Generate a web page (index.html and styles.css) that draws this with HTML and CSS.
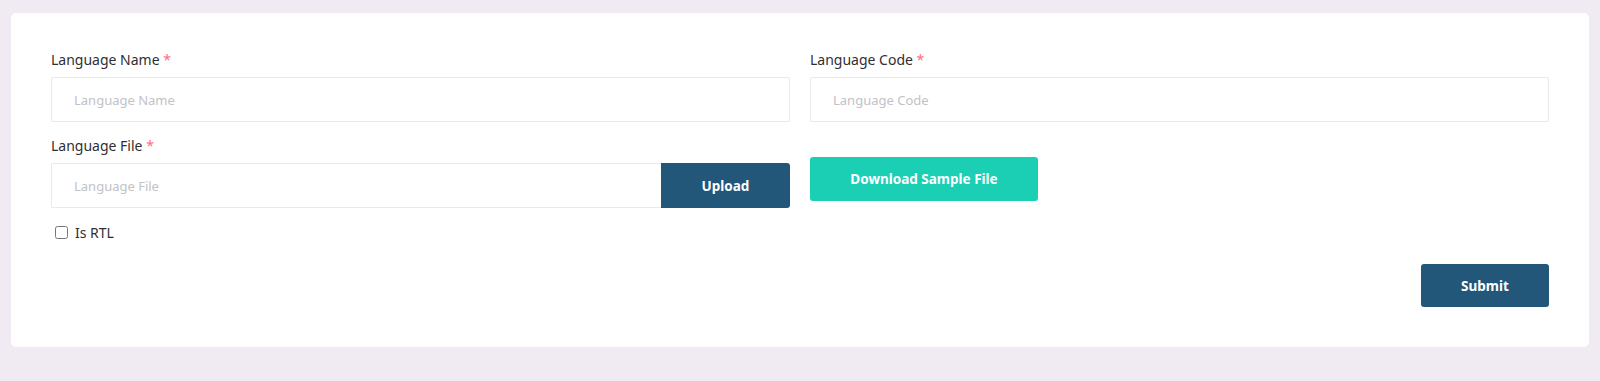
FILE: index.html
```html
<!DOCTYPE html>
<html lang="en">
<head>
    <meta charset="UTF-8">
    <meta name="viewport" content="width=device-width, initial-scale=1.0">
    <title>Add Language</title>
    <link rel="stylesheet" href="styles.css">
</head>
<body>

    <div class="card">
        <form class="language-form" onsubmit="return false;">
            <div class="form-grid">
                <!-- Row 1 -->
                <div class="form-group">
                    <label class="form-label" for="lang-name">Language Name <span class="required">*</span></label>
                    <input type="text" class="form-input" id="lang-name" placeholder="Language Name">
                </div>
                <div class="form-group">
                    <label class="form-label" for="lang-code">Language Code <span class="required">*</span></label>
                    <input type="text" class="form-input" id="lang-code" placeholder="Language Code">
                </div>

                <!-- Row 2 -->
                <div class="form-group">
                    <label class="form-label" for="lang-file">Language File <span class="required">*</span></label>
                    <div class="input-group">
                        <input type="text" class="form-input" id="lang-file" placeholder="Language File" readonly>
                        <button type="button" class="btn btn-primary btn-upload">Upload</button>
                    </div>
                    <label class="check">
                        <input type="checkbox" class="check-box">
                        <span>Is RTL</span>
                    </label>
                </div>
                <div class="form-group sample-group">
                    <button type="button" class="btn btn-accent btn-sample">Download Sample File</button>
                </div>
            </div>

            <div class="form-actions">
                <button type="submit" class="btn btn-primary btn-submit">Submit</button>
            </div>
        </form>
    </div>

</body>
</html>
```

FILE: styles.css
```css
:root {
    --page-bg: #f0ebf3;
    --card-bg: #ffffff;
    --text-color: #2f2f33;
    --placeholder: #c2c2c6;
    --border: #e9e9ec;
    --required: #ff6b81;
    --primary: #22577a;
    --accent: #1bcfb4;
}

* { box-sizing: border-box; margin: 0; padding: 0; }

body {
    padding: 13px 11px;
    font-family: 'Noto Sans', 'Open Sans', sans-serif;
    background: var(--page-bg);
    color: var(--text-color);
}

/* White panel holding the form */
.card {
    background: var(--card-bg);
    border-radius: 5px;
    padding: 37px 40px 40px;
}

.form-grid {
    display: grid;
    grid-template-columns: 1fr 1fr;
    column-gap: 20px;
    row-gap: 14px;
}

.form-label {
    display: block;
    height: 20px;
    margin-bottom: 7px;
    font-size: 14px;
    line-height: 20px;
}
.required { color: var(--required); }

.form-input {
    width: 100%;
    height: 45px;
    padding: 0 22px;
    border: 1px solid var(--border);
    border-radius: 2px;
    font-family: inherit;
    font-size: 13px;
    color: var(--text-color);
    background: #fff;
    outline: none;
}
.form-input::placeholder { color: var(--placeholder); }

/* Input with the upload button stuck to its right */
.input-group { display: flex; }
.input-group .form-input {
    flex: 1;
    border-right: none;
    border-radius: 2px 0 0 2px;
}

.btn {
    border: none;
    color: #fff;
    font-family: inherit;
    font-size: 13.5px;
    font-weight: 700;
    cursor: pointer;
}
.btn-primary { background: var(--primary); }
.btn-accent { background: var(--accent); }

.btn-upload {
    width: 129px;
    height: 45px;
    border-radius: 0 3px 3px 0;
}

.sample-group { padding-top: 21px; }
.btn-sample {
    width: 228px;
    height: 44px;
    border-radius: 3px;
}

/* Checkbox row */
.check {
    display: flex;
    align-items: center;
    gap: 7px;
    margin-top: 15px;
    padding-left: 4px;
    font-size: 14px;
    cursor: pointer;
}
.check-box {
    width: 13px;
    height: 13px;
    margin: 0;
}

.form-actions {
    display: flex;
    justify-content: flex-end;
    margin-top: 22px;
}
.btn-submit {
    width: 128px;
    height: 43px;
    border-radius: 3px;
}
```
